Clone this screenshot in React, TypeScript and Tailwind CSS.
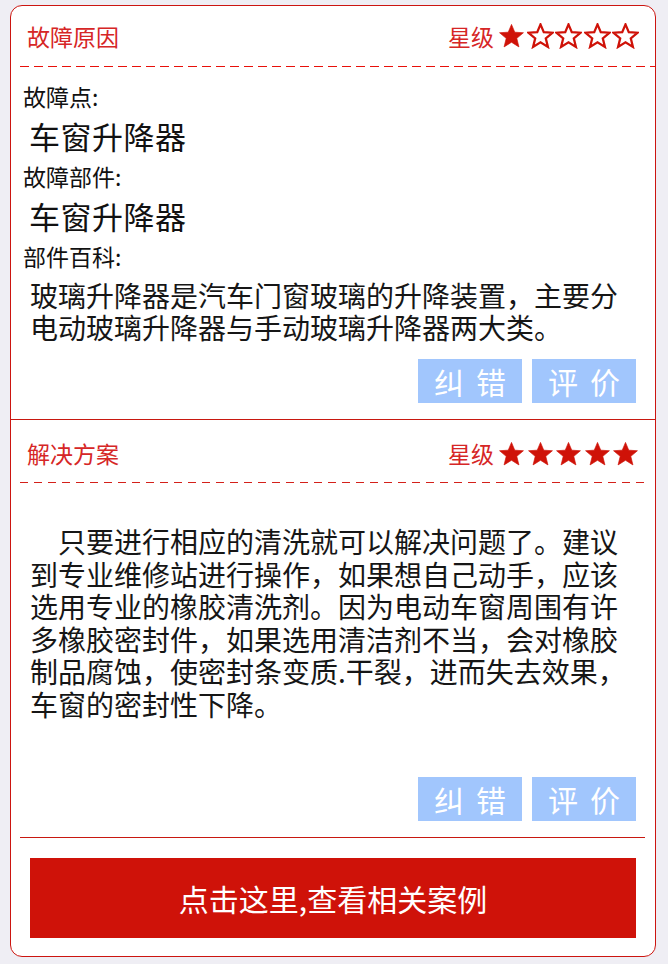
const RED = '#cf1208';

const StarIcon = ({ filled }: { filled: boolean }) => (
  <svg width="27" height="26" viewBox="0 0 24 23" className="shrink-0">
    <polygon
      points="12,1.2 14.9,8.1 22.6,8.6 16.7,13.6 18.6,21.2 12,17.1 5.4,21.2 7.3,13.6 1.4,8.6 9.1,8.1"
      fill={filled ? RED : '#fff'}
      stroke={RED}
      strokeWidth={filled ? 0.6 : 2}
      strokeLinejoin="miter"
    />
  </svg>
);

const Rating = ({ value }: { value: number }) => (
  <div className="flex items-center">
    <span className="mr-[4px] text-[23px] leading-none text-[#d62626]">星级</span>
    <div className="flex items-center gap-[1.5px]">
      {[0, 1, 2, 3, 4].map((i) => (
        <StarIcon key={i} filled={i < value} />
      ))}
    </div>
  </div>
);

const Dashed = ({ className }: { className: string }) => (
  <div className={`h-px ${className}`} />
);

const ActionButtons = () => (
  <div className="flex justify-end gap-[10px] pr-[19px]">
    <button className="flex h-[44px] w-[104px] items-center justify-center bg-[#a1c6fd] pl-[12px] text-[30px] leading-none tracking-[12px] text-white">
      纠错
    </button>
    <button className="flex h-[44px] w-[104px] items-center justify-center bg-[#a1c6fd] pl-[12px] text-[30px] leading-none tracking-[12px] text-white">
      评价
    </button>
  </div>
);

export default function App() {
  return (
    <div
      className="min-h-[964px] w-[668px] bg-[#efeef4] pt-[5px] pl-[10px]"
      style={{ fontFamily: '"Noto Sans CJK SC", "Noto Sans", sans-serif' }}
    >
      <div className="flex h-[952px] w-[646px] flex-col overflow-hidden rounded-[12px] border border-[#cc1510] bg-white">
        {/* 故障原因 */}
        <section className="border-b border-[#c81810] pb-[16px]">
          <div className="flex h-[60px] items-center justify-between pl-[16px] pr-[16px]">
            <span className="text-[23px] leading-none text-[#d62626]">故障原因</span>
            <Rating value={1} />
          </div>
          <Dashed className="ml-[9px] bg-[repeating-linear-gradient(to_right,#e8100a_0_9px,transparent_9px_14px)]" />

          <div className="mt-[14px] pl-[12px] text-[#111]">
            <div className="text-[23px] leading-[30px]">故障点:</div>
            <div className="pl-[6px] text-[31px] leading-[50px] tracking-[0.5px]">车窗升降器</div>
            <div className="text-[23px] leading-[30px]">故障部件:</div>
            <div className="pl-[6px] text-[31px] leading-[50px] tracking-[0.5px]">车窗升降器</div>
            <div className="text-[23px] leading-[30px]">部件百科:</div>
          </div>
          <p className="mt-[8px] w-[619px] pl-[19px] text-[28px] leading-[32px] text-[#161616]">
            玻璃升降器是汽车门窗玻璃的升降装置，主要分电动玻璃升降器与手动玻璃升降器两大类。
          </p>
          <div className="mt-[16px]">
            <ActionButtons />
          </div>
        </section>

        {/* 解决方案 */}
        <section className="flex flex-1 flex-col">
          <div className="flex h-[62px] items-center justify-between pt-[5px] pl-[16px] pr-[16px]">
            <span className="text-[23px] leading-none text-[#d62626]">解决方案</span>
            <Rating value={5} />
          </div>
          <Dashed className="ml-[9px] mr-[10px] bg-[repeating-linear-gradient(to_right,#d4201a_0_8px,transparent_8px_14px)]" />

          <p className="mt-[42px] w-[619px] pl-[19px] indent-[1em] text-[28px] leading-[32.6px] text-[#161616]">
            只要进行相应的清洗就可以解决问题了。建议到专业维修站进行操作，如果想自己动手，应该选用专业的橡胶清洗剂。因为电动车窗周围有许多橡胶密封件，如果选用清洁剂不当，会对橡胶制品腐蚀，使密封条变质.干裂，进而失去效果，车窗的密封性下降。
          </p>

          <div className="mt-[56px]">
            <ActionButtons />
          </div>

          <div className="mt-[16px] ml-[9px] mr-[10px] h-px bg-[#c81810]" />

          <button className="mt-[20px] ml-[19px] flex h-[80px] w-[606px] items-center justify-center bg-[#cf1209] text-[30px] leading-none text-white">
            点击这里,查看相关案例
          </button>
        </section>
      </div>
    </div>
  );
}
